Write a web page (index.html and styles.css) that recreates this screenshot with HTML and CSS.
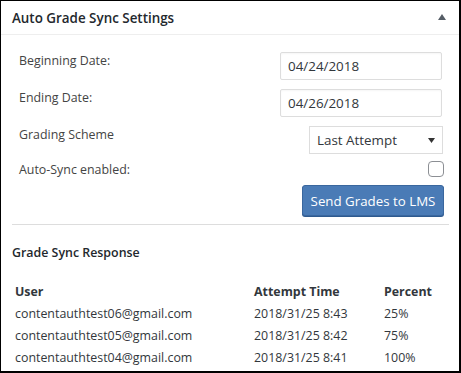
FILE: index.html
```html
<!DOCTYPE html>
<html>
<head>
<meta charset="utf-8">
<link rel="stylesheet" href="styles.css">
</head>
<body>
<div class="postbox">
  <div class="hndle">
    <h2 class="title">Auto Grade Sync Settings</h2>
    <svg class="toggle" width="8" height="6" viewBox="0 0 8 6"><path d="M4 0 L8 6 L0 6 Z" fill="#555d66"/></svg>
  </div>
  <div class="inside">
    <div class="form">
      <div class="row r1">
        <label class="lbl">Beginning Date:</label>
        <div class="field">04/24/2018</div>
      </div>
      <div class="row r2">
        <label class="lbl">Ending Date:</label>
        <div class="field">04/26/2018</div>
      </div>
      <div class="row r3">
        <label class="lbl">Grading Scheme</label>
        <div class="select"><span>Last Attempt</span><svg class="caret" width="7" height="5" viewBox="0 0 7 5"><path d="M0 0 L7 0 L3.5 5 Z" fill="#333"/></svg></div>
      </div>
      <div class="row r4">
        <label class="lbl">Auto-Sync enabled:</label>
        <div class="check"></div>
      </div>
      <div class="btnrow">
        <button class="btn">Send Grades to LMS</button>
      </div>
    </div>
    <div class="sep"></div>
    <h3 class="subtitle">Grade Sync Response</h3>
    <div class="table">
      <div class="th">User</div><div class="th">Attempt Time</div><div class="th">Percent</div>
      <div class="td">contentauthtest06@gmail.com</div><div class="td">2018/31/25 8:43</div><div class="td">25%</div>
      <div class="td">contentauthtest05@gmail.com</div><div class="td">2018/31/25 8:42</div><div class="td">75%</div>
      <div class="td">contentauthtest04@gmail.com</div><div class="td">2018/31/25 8:41</div><div class="td">100%</div>
    </div>
  </div>
</div>
</body>
</html>
```
FILE: styles.css
```css
html, body {
  margin: 0;
  padding: 0;
  background: #fff;
}
body {
  font-family: "Open Sans", "Noto Sans", sans-serif;
  color: #444;
}
.postbox {
  width: 461px;
  height: 373px;
  box-sizing: border-box;
  border-style: solid;
  border-color: #000;
  border-width: 1px 2px 2px 1px;
  overflow: hidden;
}
.hndle {
  height: 33px;
  border-bottom: 1px solid #eeeeee;
  display: flex;
  align-items: center;
  justify-content: space-between;
  padding: 0 13px 0 11px;
}
.title {
  margin: 0;
  font-size: 13.4px;
  font-weight: 600;
  color: #23282d;
}
.toggle {
  display: block;
  margin-top: -2px;
}
.inside {
  padding: 16px 0 0 0;
}
.form {
  padding: 0 15px 0 18px;
}
.row {
  display: flex;
  justify-content: space-between;
  align-items: flex-start;
}
.lbl {
  font-size: 12.4px;
  line-height: 20px;
  color: #444;
}
.r2, .r3 { margin-top: 8px; }
.r4 { margin-top: 6px; }
.field {
  margin-top: 1px;
  width: 162px;
  height: 28px;
  box-sizing: border-box;
  border: 1px solid #ddd;
  border-radius: 2px;
  padding: 0 7px;
  font-size: 13.4px;
  line-height: 27px;
  color: #32373c;
  margin-right: 2px;
  box-shadow: inset 0 1px 2px rgba(0,0,0,0.04);
}
.select {
  margin-top: 1px;
  width: 134px;
  height: 28px;
  box-sizing: border-box;
  border: 1px solid #ddd;
  padding: 0 7px 0 7px;
  font-size: 13.4px;
  line-height: 26px;
  color: #32373c;
  display: flex;
  justify-content: space-between;
  align-items: center;
  margin-right: 1px;
}
.caret { display: block; }
.check {
  margin-top: 1px;
  width: 16px;
  height: 16px;
  box-sizing: border-box;
  border: 1px solid #8c8f94;
  border-radius: 4px;
  background: #fff;
}
.btnrow {
  display: flex;
  justify-content: flex-end;
  margin-top: 5px;
}
.btn {
  width: 142px;
  height: 31px;
  box-sizing: border-box;
  background: #4a7bb6;
  border: 1px solid #3a679e;
  border-radius: 3px;
  color: #fff;
  font-family: "Open Sans", "Noto Sans", sans-serif;
  font-size: 13.3px;
  padding: 0;
  box-shadow: 0 1px 0 #2e5a8f;
}
.sep {
  margin: 8px 10px 0 11px;
  border-top: 1px solid #ddd;
}
.subtitle {
  margin: 18px 0 0 11px;
  font-size: 12.4px;
  font-weight: 600;
  line-height: 20px;
  color: #23282d;
}
.table {
  margin: 18px 0 0 14px;
  display: grid;
  grid-template-columns: 239px 130px auto;
  grid-auto-rows: 22px;
  font-size: 12.4px;
  line-height: 22px;
  color: #32373c;
}
.th {
  font-weight: 700;
  color: #32373c;
}
```
